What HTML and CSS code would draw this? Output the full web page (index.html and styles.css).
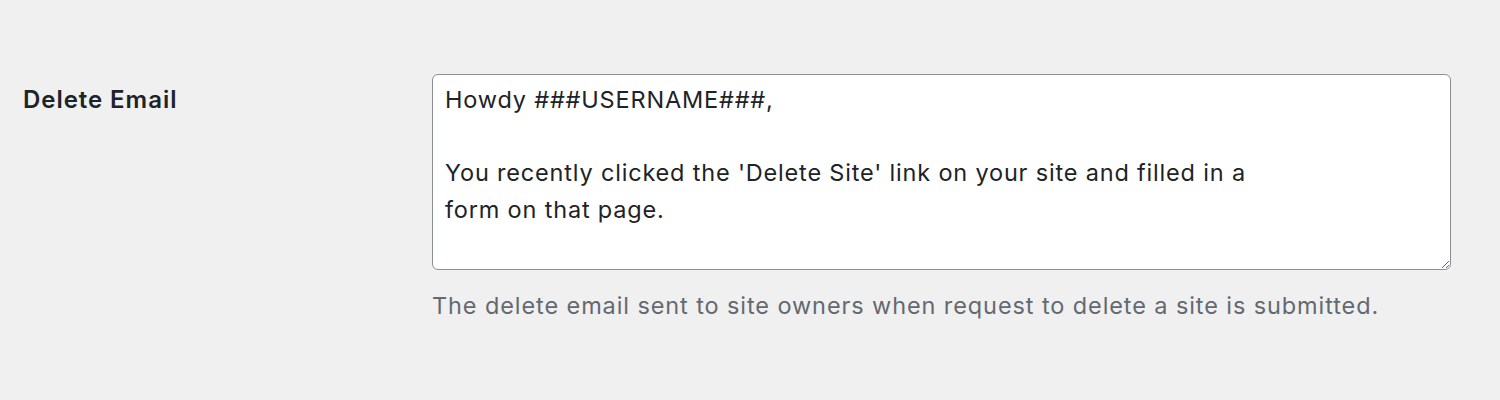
FILE: index.html
```html
<!DOCTYPE html>
<html lang="en">
<head>
<meta charset="utf-8">
<title>Delete Email</title>
<link rel="stylesheet" href="styles.css">
</head>
<body>
<div class="form-row">
  <label class="row-label" for="delete-email">Delete Email</label>
  <div class="row-field">
    <textarea id="delete-email" class="email-text" spellcheck="false">Howdy ###USERNAME###,

You recently clicked the 'Delete Site' link on your site and filled in a
form on that page.

If you really want to delete your site, click the link below. You will not
be asked to confirm again so only click this link if you are absolutely certain:
###URL_DELETE###</textarea>
    <p class="description">The delete email sent to site owners when request to delete a site is submitted.</p>
  </div>
</div>
</body>
</html>
```
FILE: styles.css
```css
html, body {
  margin: 0;
  padding: 0;
  background: #f0f0f1;
}
body {
  font-family: Inter, "Noto Sans", sans-serif;
  color: #1d2327;
  width: 1500px;
  height: 400px;
  overflow: hidden;
}
.form-row {
  display: grid;
  grid-template-columns: 409px 1019px;
  padding: 74px 0 0 23px;
}
.row-label {
  font-size: 24px;
  font-weight: 600;
  letter-spacing: 0.95px;
  line-height: 36px;
  padding-top: 8px;
}
.row-field {
  display: flex;
  flex-direction: column;
}
.email-text {
  box-sizing: border-box;
  width: 1019px;
  height: 196px;
  margin: 0;
  padding: 7px 12px;
  border: 1.5px solid #8c8f94;
  border-radius: 6px;
  background: #fff;
  color: #1d2327;
  font-family: Inter, "Noto Sans", sans-serif;
  font-size: 23.5px;
  letter-spacing: 0.82px;
  line-height: 36.5px;
  overflow: hidden;
  resize: vertical;
  outline: none;
}
.description {
  margin: 20px 0 0;
  font-size: 23.5px;
  letter-spacing: 0.9px;
  line-height: 32px;
  color: #646970;
}
```
